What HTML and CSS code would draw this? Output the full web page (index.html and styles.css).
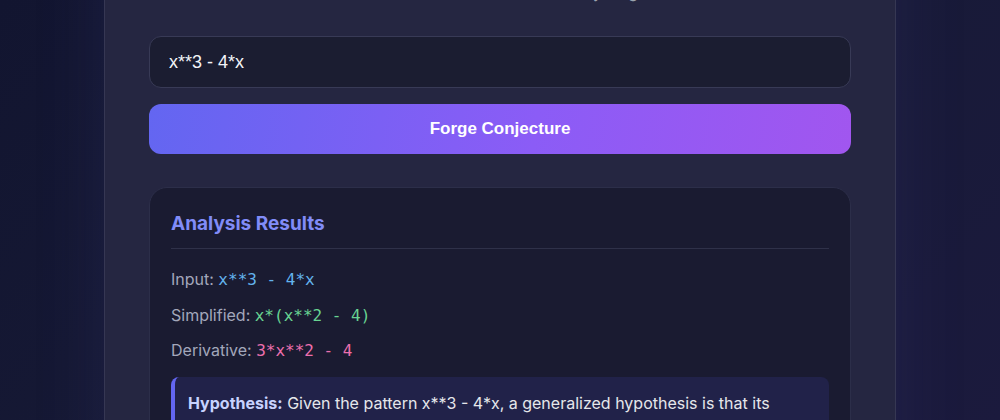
FILE: index.html
```html
<!DOCTYPE html>
<html lang="en">
<head>
<meta charset="utf-8">
<title>Conjecture Forge</title>
<link rel="stylesheet" href="styles.css">
</head>
<body>
<main class="card">
  <header class="header">
    <h1 class="title">Conjecture Forge</h1>
    <p class="subtitle">Submit a new formula now to be examined by its great AI minds.</p>
  </header>
  <input class="expr-input" type="text" value="x**3 - 4*x">
  <button class="forge-btn" type="button">Forge Conjecture</button>
  <section class="results">
    <h3 class="results-title">Analysis Results</h3>
    <p class="row">Input: <code class="code code-input">x**3 - 4*x</code></p>
    <p class="row">Simplified: <code class="code code-simple">x*(x**2 - 4)</code></p>
    <p class="row">Derivative: <code class="code code-deriv">3*x**2 - 4</code></p>
    <div class="hypothesis">
      <p class="hyp-text"><strong class="hyp-label">Hypothesis:</strong> Given the pattern x**3 - 4*x, a generalized hypothesis is that its derivative reveals the turning points of the curve, where the slope vanishes and the function changes direction.</p>
    </div>
  </section>
</main>
</body>
</html>
```
FILE: styles.css
```css
* { box-sizing: border-box; }

html, body { height: 100%; }

body {
  margin: 0;
  background: linear-gradient(135deg, #121530 0%, #171a36 50%, #1b1a3d 100%);
  font-family: Inter, "Noto Sans", sans-serif;
  overflow: hidden;
}

.card {
  width: 792px;
  margin: -109px auto 0;
  padding: 40px 44px 40px;
  background: #252641;
  border: 1px solid #363753;
  border-radius: 20px;
  box-shadow: 0 0 70px rgba(70, 72, 150, 0.18);
}

.header { text-align: center; margin-bottom: 32px; }

.title {
  margin: 0 0 8px;
  font-size: 32px;
  line-height: 40px;
  color: #c7d2fe;
  font-weight: 700;
}

.subtitle {
  margin: 0;
  font-size: 16px;
  line-height: 24px;
  color: #9ca3af;
}

.expr-input {
  display: block;
  width: 100%;
  height: 52px;
  padding: 0 19px;
  background: #1b1d31;
  border: 1px solid #383a56;
  border-radius: 12px;
  color: #f3f4f8;
  font-family: "Liberation Sans", Arial, sans-serif;
  font-size: 18px;
  outline: none;
}

.forge-btn {
  display: block;
  width: 100%;
  height: 50px;
  margin-top: 16px;
  border: 0;
  border-radius: 12px;
  background: linear-gradient(100deg, #6366f1 0%, #8b5cf6 55%, #a156ef 100%);
  color: #ffffff;
  font-family: "Liberation Sans", Arial, sans-serif;
  font-weight: 700;
  font-size: 17px;
}

.results {
  margin-top: 33px;
  padding: 24px 21px 24px;
  background: #1a1b31;
  border: 1px solid #2c2e49;
  border-radius: 18px;
}

.results-title {
  margin: 0;
  padding-bottom: 12px;
  border-bottom: 1px solid #2f3149;
  font-size: 19px;
  line-height: 24px;
  font-weight: 700;
  color: #818cf8;
}

.row {
  margin: 0;
  margin-top: 10.5px;
  font-size: 16px;
  line-height: 24px;
  color: #a3a7bb;
}

.row:first-of-type { margin-top: 18px; }

.code {
  font-family: "DejaVu Sans Mono", monospace;
  font-size: 16px;
  line-height: 24px;
}

.code-input { color: #63b3ed; }
.code-simple { color: #68d391; }
.code-deriv { color: #ec6fae; }

.hypothesis {
  margin-top: 14px;
  padding: 14px 13px;
  background: #212249;
  border-left: 4px solid #6366f1;
  border-radius: 8px;
}

.hyp-text {
  margin: 0;
  font-size: 16px;
  line-height: 24px;
  color: #e5e7eb;
}

.hyp-label { color: #c7d2fe; font-weight: 700; }
```
